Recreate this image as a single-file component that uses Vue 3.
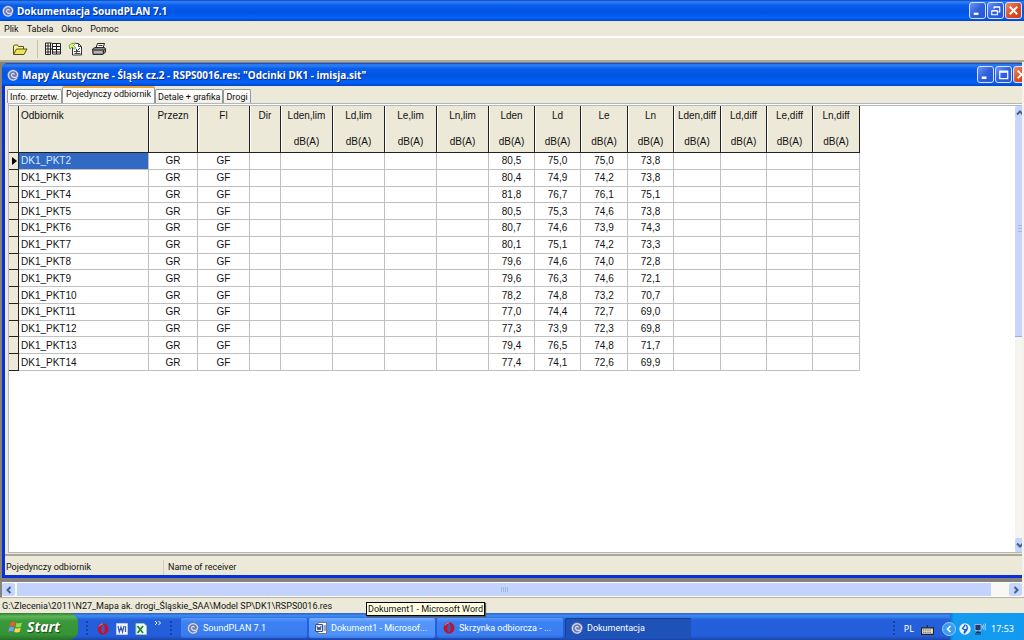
<script setup>
const menus = ['Plik', 'Tabela', 'Okno', 'Pomoc']
const tabs = ['Info. przetw.', 'Pojedynczy odbiornik', 'Detale + grafika', 'Drogi']
const columns = [
  { name: 'Odbiornik', width: 130 },
  { name: 'Przezn', width: 49 },
  { name: 'Fl', width: 52 },
  { name: 'Dir', width: 31 },
  { name: 'Lden,lim', unit: true, width: 52 },
  { name: 'Ld,lim', unit: true, width: 52 },
  { name: 'Le,lim', unit: true, width: 52 },
  { name: 'Ln,lim', unit: true, width: 52 },
  { name: 'Lden', unit: true, width: 46 },
  { name: 'Ld', unit: true, width: 46 },
  { name: 'Le', unit: true, width: 47 },
  { name: 'Ln', unit: true, width: 46 },
  { name: 'Lden,diff', unit: true, width: 47 },
  { name: 'Ld,diff', unit: true, width: 46 },
  { name: 'Le,diff', unit: true, width: 46 },
  { name: 'Ln,diff', unit: true, width: 47 },
]
const levels = [
  ['80,5', '75,0', '75,0', '73,8'],
  ['80,4', '74,9', '74,2', '73,8'],
  ['81,8', '76,7', '76,1', '75,1'],
  ['80,5', '75,3', '74,6', '73,8'],
  ['80,7', '74,6', '73,9', '74,3'],
  ['80,1', '75,1', '74,2', '73,3'],
  ['79,6', '74,6', '74,0', '72,8'],
  ['79,6', '76,3', '74,6', '72,1'],
  ['78,2', '74,8', '73,2', '70,7'],
  ['77,0', '74,4', '72,7', '69,0'],
  ['77,3', '73,9', '72,3', '69,8'],
  ['79,4', '76,5', '74,8', '71,7'],
  ['77,4', '74,1', '72,6', '69,9'],
]
const rows = levels.map((l, i) => [`DK1_PKT${i + 2}`, 'GR', 'GF', '', '', '', '', '', ...l, '', '', '', ''])
const path = 'G:\\Zlecenia\\2011\\N27_Mapa ak. drogi_Śląskie_SAA\\Model SP\\DK1\\RSPS0016.res'
</script>

<template>
  <div class="screen">
    <svg class="defs" aria-hidden="true">
      <symbol id="swirl" viewBox="0 0 12 12">
        <circle cx="6" cy="6" r="5.8" fill="#6a7ab0" />
        <path d="M10 9A4.700 4.700 0 1 1 10.600 5c.2 2.300-1.400 3.700-3 3.500C5 8.400 4.100 6.800 4.600 5.500 5.100 4.200 7 4 7.400 5.600" fill="none" stroke="#d5daee" stroke-width="1.300" />
      </symbol>
      <symbol id="opera" viewBox="0 0 12 12">
        <ellipse cx="6" cy="6" rx="5.500" ry="5.800" fill="#c4122a" />
        <ellipse cx="6" cy="6" rx="1.800" ry="4.200" fill="#4458b4" />
        <path d="M2 3.500Q3 1 6 .8" fill="none" stroke="#f0808a" />
      </symbol>
    </svg>

    <header class="titlebar main-title">
      <svg class="app-icon"><use href="#swirl" /></svg>
      <h1>Dokumentacja SoundPLAN 7.1</h1>
      <div class="win-buttons">
        <button aria-label="Minimalizuj"><svg viewBox="0 0 16 16"><path d="M4 11.500h5" stroke="#fff" stroke-width="2.500" /></svg></button>
        <button aria-label="Przywróć"><svg viewBox="0 0 16 16"><path d="M6.500 6V4.500h6v5H11M6 4h7M4 8.500h6v4H4zM4 8h6" fill="none" stroke="#fff" stroke-width="1.200" /></svg></button>
        <button class="close" aria-label="Zamknij"><svg viewBox="0 0 16 16"><path d="M4 4l8 8M12 4l-8 8" stroke="#fff" stroke-width="2" /></svg></button>
      </div>
    </header>

    <nav class="menubar">
      <button v-for="m in menus" :key="m">{{ m }}</button>
    </nav>

    <div class="toolbar">
      <button aria-label="Otwórz">
        <svg viewBox="0 0 16 14"><path d="M1.500 12V4l1-1h3l1 1.500h5V7" fill="#fff799" stroke="#55501a" /><path d="M1.500 12.500L4.500 7h10.500l-3 5.500z" fill="#ece45a" stroke="#55501a" /></svg>
      </button>
      <span class="tool-sep"></span>
      <button aria-label="Tabela">
        <svg viewBox="0 0 16 14"><path d="M.5 1h5v11.500h-5zM7 1.500h8.500V12H7z" fill="#fff" /><path d="M.5 1h5v11.500h-5zM7.500 1.500h8V12h-8zM.5 4h5M.5 7h5M.5 10h5M3 1v11.500M7.500 4.500h8M7.500 7.500h8M7.500 10h8M11.500 1.500V12M5.500 7h2M6 .5l1.500 1.500" fill="none" stroke="#222" /></svg>
      </button>
      <button aria-label="Grafika">
        <svg viewBox="0 0 16 14"><path d="M4.500 1.500h6l3 3v8.500H4.500z" fill="#fff" stroke="#333" /><path d="M10.500 1.500v3h3M8 7l1.500 1.500L12 6M6.500 11.500h6M6 9.500h6M8.500 8v4" fill="none" stroke="#444" /><path d="M1 3.500Q3 .5 8 1L5.500 3.500 8 6l-1.500 1L4 5 2 7z" fill="#e9ee75" stroke="#45a04a" stroke-width=".8" /></svg>
      </button>
      <button aria-label="Drukuj">
        <svg viewBox="0 0 16 14"><path d="M5 6l1.500-4.500h7L12 6z" fill="#fff" stroke="#222" /><path d="M1.500 7L4 5.500h9.500l1 1v3.500l-2.500 2.500H2z" fill="#8a8a88" stroke="#2b2b2b" /><path d="M2 8h10.500L14.500 6.500M7.500 3.500h4M12.500 8V12" fill="none" stroke="#333" /><path d="M3 10h8" stroke="#ddd" /></svg>
      </button>
    </div>

    <main class="mdi">
      <section class="child">
        <header class="titlebar child-title">
          <svg class="app-icon"><use href="#swirl" /></svg>
          <h2>Mapy Akustyczne - Śląsk cz.2 - RSPS0016.res: "Odcinki DK1 - imisja.sit"</h2>
          <div class="win-buttons">
            <button aria-label="Minimalizuj okno"><svg viewBox="0 0 16 16"><path d="M4 11.500h5" stroke="#fff" stroke-width="2.500" /></svg></button>
            <button aria-label="Maksymalizuj okno"><svg viewBox="0 0 16 16"><path d="M4 4.500h8.500v8H4zM4 5.500h8" fill="none" stroke="#fff" stroke-width="1.300" /></svg></button>
            <button class="close" aria-label="Zamknij okno"><svg viewBox="0 0 16 16"><path d="M4 4l8 8M12 4l-8 8" stroke="#fff" stroke-width="2" /></svg></button>
          </div>
        </header>
        <div class="child-body">
          <div class="tabs" role="tablist">
            <button v-for="(t, i) in tabs" :key="t" role="tab" :aria-selected="i === 1" :class="{ active: i === 1 }">{{ t }}</button>
          </div>
          <div class="grid-area">
            <div class="grid-view">
              <table>
                <colgroup>
                  <col class="mark-col" />
                  <col v-for="c in columns" :key="c.name" :style="{ width: c.width + 'px' }" />
                </colgroup>
                <thead>
                  <tr>
                    <th class="mark"></th>
                    <th v-for="c in columns" :key="c.name" scope="col">
                      <div>{{ c.name }}</div>
                      <div v-if="c.unit" class="unit">dB(A)</div>
                    </th>
                  </tr>
                </thead>
                <tbody>
                  <tr v-for="(r, i) in rows" :key="r[0]">
                    <td class="mark"><svg v-if="i === 0" viewBox="0 0 5 8"><path d="M0 0l5 4-5 4z" /></svg></td>
                    <td v-for="(v, j) in r" :key="j" :class="{ selected: i === 0 && j === 0 }">{{ v }}</td>
                  </tr>
                </tbody>
              </table>
            </div>
            <div class="vscroll">
              <button aria-label="W górę"><svg viewBox="0 0 8 8"><path d="M1 5.500l3-3 3 3" /></svg></button>
              <div class="vtrack"><div class="vthumb"><i></i><i></i><i></i></div></div>
              <button aria-label="W dół"><svg viewBox="0 0 8 8"><path d="M1 2.500l3 3 3-3" /></svg></button>
            </div>
          </div>
          <footer class="child-status">
            <span>Pojedynczy odbiornik</span>
            <span>Name of receiver</span>
          </footer>
        </div>
      </section>
      <div class="hscroll">
        <button aria-label="W lewo"><svg viewBox="0 0 8 8"><path d="M5.500 1l-3 3 3 3" /></svg></button>
        <div class="htrack"><div class="hthumb"><i></i><i></i><i></i><i></i></div></div>
        <button aria-label="W prawo"><svg viewBox="0 0 8 8"><path d="M2.500 1l3 3-3 3" /></svg></button>
      </div>
    </main>

    <footer class="status">{{ path }}</footer>

    <div class="taskbar">
      <button class="start">
        <svg viewBox="0 0 16 16"><path d="M2.500 3.500Q5 2 7.500 3.500L6.500 7.500Q4 6.200 1.500 7.500z" fill="#f0592d" /><path d="M8.500 3.800Q11 5 14 3.500L13 7.700Q10.500 9 7.500 7.800z" fill="#8fdc4c" /><path d="M1.200 8.500Q4 7.200 6.200 8.500L5.200 12.500Q3 11.300.3 12.600z" fill="#6f9ffa" /><path d="M7.200 8.900Q10 10 12.700 8.700L11.700 12.800Q9 14 6.200 13z" fill="#ffd840" /></svg>
        Start
      </button>
      <span class="dots"></span>
      <div class="quick">
        <button aria-label="Opera"><svg viewBox="0 0 12 12"><use href="#opera" /></svg></button>
        <button aria-label="Word"><svg viewBox="0 0 12 12"><path d="M.5.5h11v11H.5z" fill="#f4f6ff" stroke="#b9c8f0" /><path d="M2 3l1.300 6L5 4l1.500 5L8 3M9.500 3v6" fill="none" stroke="#3558b8" stroke-width="1.200" /></svg></button>
        <button aria-label="Excel"><svg viewBox="0 0 12 12"><path d="M1 .5h8l2.500 2.500v8.500H1z" fill="#f4fff4" stroke="#9fc7a8" /><path d="M2.500 3l5.500 7M8 3l-5.500 7" stroke="#23803a" stroke-width="1.800" /></svg></button>
        <button class="more" aria-label="Więcej"><svg viewBox="0 0 8 8"><path d="M1 1l2 2-2 2M4.500 1l2 2-2 2" fill="none" stroke="#fff" /></svg></button>
      </div>
      <span class="dots"></span>
      <div class="tasks">
        <button><svg viewBox="0 0 12 12"><use href="#swirl" /></svg><span>SoundPLAN 7.1</span></button>
        <div class="task-wrap">
          <button class="hover"><svg viewBox="0 0 12 12"><path d="M3 .5h8.500v11H3z" fill="#fff" stroke="#777" /><path d="M.5 2.500h7v7h-7z" fill="#dfe7fa" stroke="#334f90" /><path d="M2 4l1 4 1-3 1 3 1-4M8.500 4H11M8.500 6H11M8.500 8H11" fill="none" stroke="#334f90" /></svg><span>Dokument1 - Microsof...</span></button>
          <div class="tooltip" role="tooltip">Dokument1 - Microsoft Word</div>
        </div>
        <button><svg viewBox="0 0 12 12"><use href="#opera" /></svg><span>Skrzynka odbiorcza - ...</span></button>
        <button class="pressed"><svg viewBox="0 0 12 12"><use href="#swirl" /></svg><span>Dokumentacja</span></button>
      </div>
      <span class="dots"></span>
      <div class="lang">
        <span>PL</span>
        <svg viewBox="0 0 12 10"><path d="M6 3V1" stroke="#222" /><path d="M.5 3.500h11v6H.5z" fill="#e8e4c8" stroke="#222" /><path d="M2 5.500h8M2 7.500h8" stroke="#333" stroke-dasharray="1 1" /></svg>
      </div>
      <div class="tray">
        <button class="chevron" aria-label="Pokaż ukryte ikony"><svg viewBox="0 0 14 14"><circle cx="7" cy="7" r="6.500" fill="#3c9df0" stroke="#8fd0fb" /><path d="M8.500 4l-3 3 3 3" fill="none" stroke="#fff" stroke-width="1.600" /></svg></button>
        <svg class="tray-icon" viewBox="0 0 12 12"><circle cx="6" cy="6" r="5.700" fill="#e9f3ff" /><path d="M6.500 1.500L3.500 5.500 6 7 5 10.500M6 7l2.500-1.500L7.500 2M5 10.500L8.500 6" fill="none" stroke="#1c62c8" stroke-width="1.300" /></svg>
        <svg class="tray-icon" viewBox="0 0 12 12"><path d="M1 1.500h6v6H1z" fill="#26386b" stroke="#c3d3ee" stroke-width=".7" /><path d="M2 9.500h5M4 7.500v2M1 11h6" stroke="#1d2d58" /><path d="M8 2.500q1 1.500 0 3M9.500 1.500q1.500 2.500 0 5M11 .5q2 3.500 0 7" fill="none" stroke="#d5e9ff" stroke-width=".7" /></svg>
        <time>17:53</time>
      </div>
    </div>
  </div>
</template>

<style>
body { background: #ece9d8; overflow: hidden; }
</style>

<style scoped>
* { box-sizing: border-box; }
button { font: inherit; color: inherit; border: 0; padding: 0; margin: 0; background: none; }
svg { display: block; flex: none; }
.defs { position: absolute; width: 0; height: 0; }
.screen {
  height: 100vh;
  display: flex;
  flex-direction: column;
  background: #ece9d8;
  color: #111;
  font: 9px/12px Roboto, "Liberation Sans", sans-serif;
  overflow: hidden;
}
.titlebar {
  flex: none;
  display: flex;
  align-items: center;
  gap: 3px;
  background: linear-gradient(#0a3fc0 0, #2f83f7 8%, #0a5cea 25%, #0054e3 60%, #0463f8 85%, #0142c4 100%);
  color: #fff;
}
.main-title { height: 21px; padding: 0 2px; }
.app-icon { width: 12px; height: 12px; }
h1, h2 {
  margin: 0;
  flex: 1;
  font: bold 10px/14px "Noto Sans", sans-serif;
  white-space: nowrap;
  text-shadow: 1px 1px 0 #0a2f8a;
}
.win-buttons { display: flex; gap: 1px; }
.win-buttons button {
  width: 17px;
  height: 17px;
  border: 1px solid #d6e2fb;
  border-radius: 3px;
  background: linear-gradient(135deg, #6e95f0, #2f5fdc 50%, #2457d6);
}
.win-buttons svg { width: 15px; height: 15px; }
.win-buttons .close { background: linear-gradient(135deg, #ee8a68, #dc4f28 50%, #cf3c14); }

.menubar { flex: none; height: 15px; display: flex; gap: 8px; padding-left: 4px; align-items: center; }
.toolbar {
  flex: none;
  height: 26px;
  display: flex;
  align-items: center;
  gap: 7px;
  padding-left: 12px;
  border-top: 2px solid #fff;
  border-bottom: 2px solid #aca899;
}
.toolbar svg { width: 16px; height: 14px; }
.tool-sep { width: 1px; height: 18px; background: #c5c1af; margin-left: 2px; }

.mdi {
  flex: 1;
  min-height: 0;
  display: flex;
  flex-direction: column;
  overflow: hidden;
  background: #85827c;
  padding: 1px 0 0 2px;
  border-right: 2px solid #f4f2ea;
}
.child {
  flex: 1;
  min-height: 0;
  margin-right: -10px;
  display: flex;
  flex-direction: column;
  border-radius: 6px 6px 0 0;
  background: #0831d9;
  overflow: hidden;
}
.child-title { height: 23px; padding: 0 2px 0 5px; }
.child-body {
  flex: 1;
  min-height: 0;
  margin: 0 0 3px 3px;
  background: #ece9d8;
  display: flex;
  flex-direction: column;
}
.tabs { flex: none; height: 17px; display: flex; align-items: flex-end; padding-left: 2px; }
.tabs button {
  height: 14px;
  padding: 0 2px;
  border: 1px solid #919b9c;
  border-bottom: 0;
  border-radius: 2px 2px 0 0;
  background: linear-gradient(#fff, #f1efe6);
  white-space: nowrap;
}
.tabs .active { height: 17px; padding: 0 3px 3px; border-top: 2px solid #e9a23b; background: #fbfaf7; }
.grid-area {
  flex: 1;
  min-height: 0;
  display: flex;
  margin-left: 3px;
  border: 1px solid #b3b7b8;
  border-top: 3px double #b3b7b8;
  background: #fff;
}
.grid-view { flex: 1; overflow: hidden; }
table {
  border-collapse: separate;
  border-spacing: 0;
  table-layout: fixed;
  width: 851px;
  height: 265px;
  font: 10px/14px "Liberation Sans", sans-serif;
}
.mark-col { width: 10px; }
th, td { padding: 0; text-align: center; white-space: nowrap; }
th {
  height: 47px;
  padding-top: 3px;
  font-weight: normal;
  vertical-align: top;
  background: #ece9d8;
  border-right: 1px solid #222;
  border-bottom: 1px solid #222;
  box-shadow: inset 1px 0 #fff;
}
.unit { margin-top: 12px; }
th:nth-child(2), td:nth-child(2) { text-align: left; padding-left: 2px; }
td { border-right: 1px solid #c0c0c0; border-bottom: 1px solid #c0c0c0; line-height: 15px; }
td.mark { background: #ece9d8; border-color: #222; }
td.mark svg { width: 5px; height: 8px; margin-left: 3px; }
td.selected { background: #316ac5; color: #dbe8ff; }

.vscroll { flex: none; width: 16px; display: flex; flex-direction: column; background: #f5f4ee; }
.vscroll button, .hscroll button {
  flex: none;
  display: grid;
  place-items: center;
  border-radius: 2px;
  background: #c6d5fb;
}
.vscroll button { height: 14px; width: 9px; }
.vscroll svg, .hscroll svg { width: 8px; height: 8px; fill: none; stroke: #44608e; stroke-width: 2; }
.vtrack { flex: 1; display: flex; }
.vthumb {
  width: 16px;
  height: 52%;
  display: flex;
  flex-direction: column;
  align-items: flex-start;
  justify-content: center;
  gap: 2px;
  padding-left: 3px;
  background: #c9d5fb;
  border-bottom: 1px solid #9aaede;
}
.vthumb i { width: 5px; height: 1px; background: #a3b6e4; }

.child-status { flex: none; height: 21px; padding: 4px 1px 0; display: flex; border-top: 2px solid #aaa899; margin-top: 1px; line-height: 14px; }
.child-status span:first-child { width: 158px; border-right: 1px solid #d2cebc; }
.child-status span:last-child { padding-left: 4px; }

.hscroll { flex: none; height: 15px; margin-top: 4px; display: flex; background: #f7f7f3; border: 1px solid #fff; border-width: 1px 0; }
.hscroll button { width: 13px; }
.htrack { flex: 1; padding: 0 18px 0 2px; display: flex; }
.hthumb { flex: 1; display: flex; align-items: center; justify-content: center; gap: 1px; background: #c3d3fb; }
.hthumb i { width: 1px; height: 5px; background: #a3b6e4; }

.status { flex: none; height: 16px; padding-left: 2px; line-height: 16px; border-top: 1px solid #b5b2a2; white-space: nowrap; }

.taskbar {
  flex: none;
  height: 27px;
  display: flex;
  align-items: stretch;
  color: #fff;
  font: 9px/12px "Noto Sans", sans-serif;
  background: linear-gradient(#2d62c9 0, #3f8cf0 10%, #2560dc 25%, #245edb 85%, #1b45a8 100%);
}
.start {
  width: 78px;
  display: flex;
  align-items: center;
  gap: 3px;
  padding-left: 8px;
  border-radius: 0 9px 9px 0;
  background: linear-gradient(#2f7d2f 0, #5eb55a 12%, #3b983b 30%, #369336 80%, #26702a 100%);
  font: italic bold 14px/20px "Open Sans", sans-serif;
  text-shadow: 1px 1px 1px #1b4a1b;
}
.start svg { width: 16px; height: 16px; }
.dots { flex: none; width: 5px; margin: 7px 7px 4px; background: radial-gradient(circle, #16439e 1px, transparent 1px) 0 0 / 4px 4px; }
.quick { display: flex; align-items: center; gap: 7px; padding-top: 4px; }
.quick svg { width: 12px; height: 12px; }
.quick .more { align-self: flex-start; padding-top: 3px; }
.quick .more svg { width: 8px; height: 8px; }
.tasks { flex: 1; display: flex; gap: 2px; padding-top: 5px; font: 9px/12px Roboto, sans-serif; }
.tasks button {
  width: 126px;
  height: 20px;
  display: flex;
  align-items: center;
  gap: 4px;
  padding: 0 6px;
  border-radius: 2px;
  background: linear-gradient(#5a98fa, #3c81f3 20%, #3a7df0 85%, #2f68d6);
  white-space: nowrap;
}
.tasks .hover { background: linear-gradient(#7cb0ff, #5496fb 20%, #4f92f8 85%, #3d7ce6); }
.tasks .pressed { background: #1e52b7; box-shadow: inset 1px 1px #173f90; }
.tasks svg { width: 12px; height: 12px; }
.task-wrap { position: relative; }
.tooltip {
  position: absolute;
  left: 57px;
  top: -16px;
  padding: 0 1px;
  border: 1px solid #000;
  background: #ffffe1;
  color: #111;
  box-shadow: 1px 1px 1px #555;
  white-space: nowrap;
}
.lang { display: flex; align-items: center; gap: 7px; padding: 5px 8px 0 0; }
.lang svg { width: 13px; height: 11px; }
.tray {
  display: flex;
  align-items: center;
  gap: 3px;
  padding: 4px 10px 0 0;
  background: linear-gradient(90deg, transparent 8px, #0b77d8 8px, #149bf0 12px, #129af0);
}
.tray .chevron svg { width: 14px; height: 14px; }
.tray-icon { width: 12px; height: 12px; }
time { margin-left: 2px; }
</style>
